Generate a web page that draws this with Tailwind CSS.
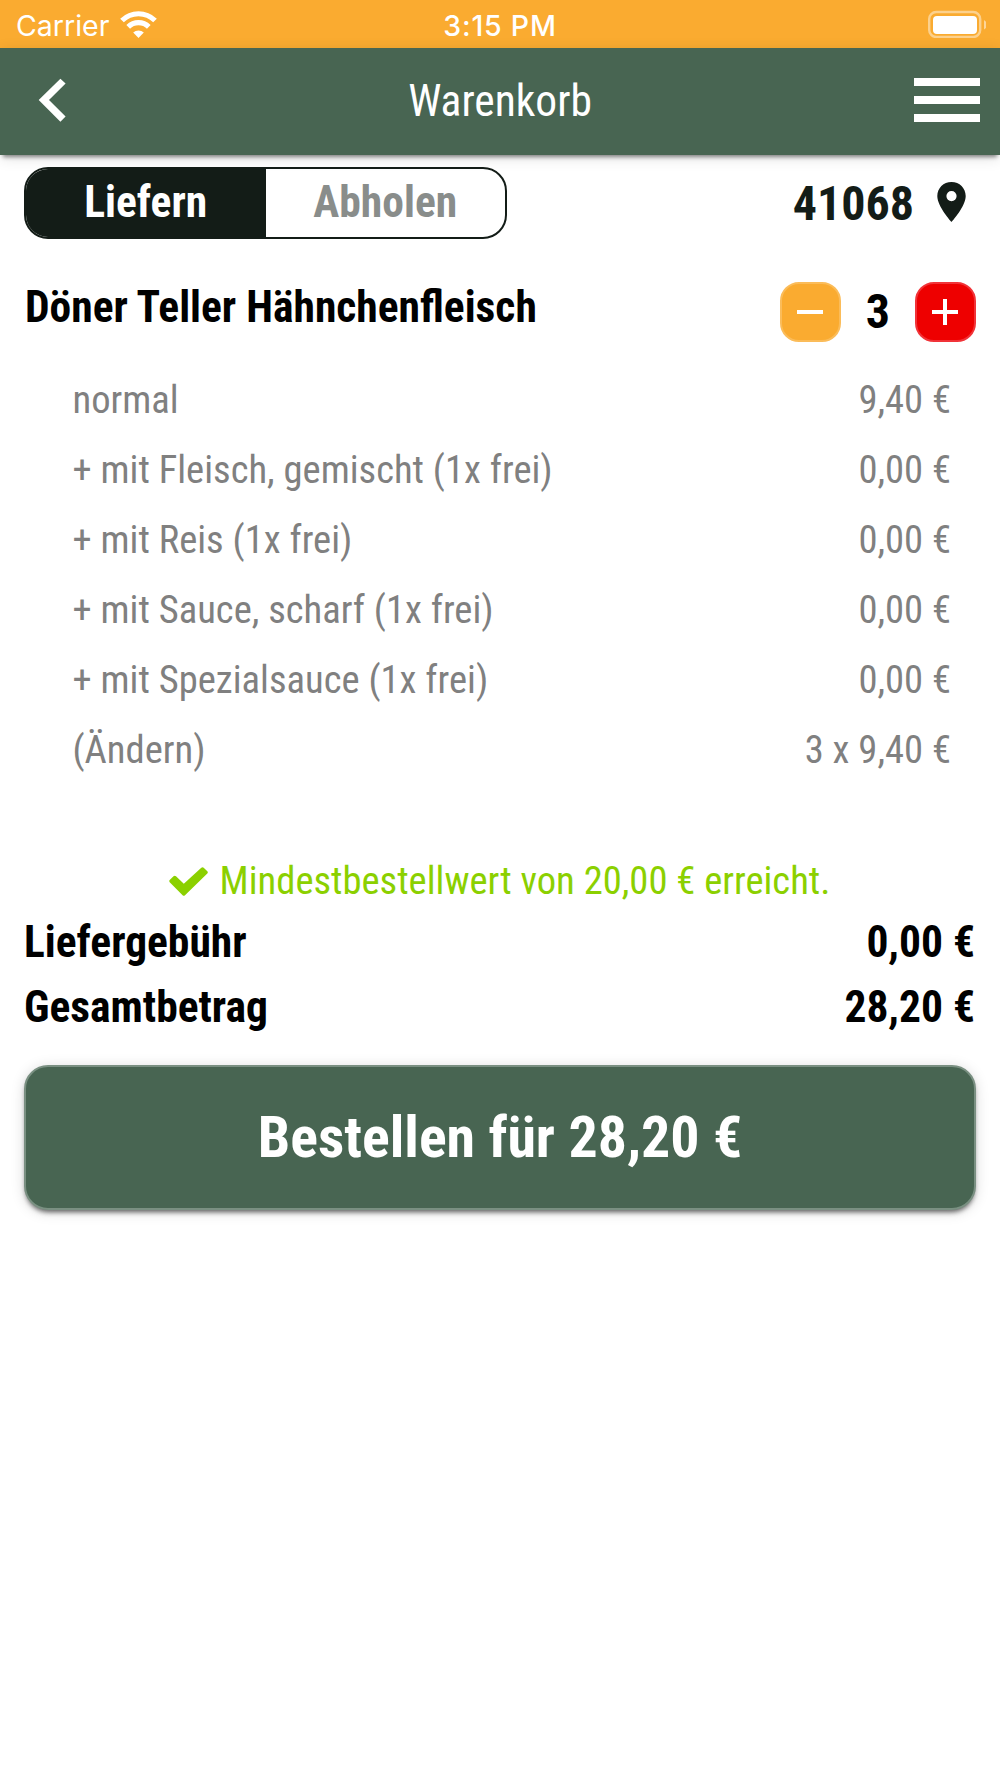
<!DOCTYPE html>
<html lang="de">
<head>
<meta charset="utf-8">
<title>Warenkorb</title>
<script src="https://cdn.jsdelivr.net/npm/@tailwindcss/browser@4"></script>
</head>
<body class="min-h-[1778px] bg-white font-['Roboto_Condensed',Roboto,sans-serif] text-black">
<div class="grid h-12 grid-cols-[1fr_auto_1fr] items-center bg-[#faab30] px-[14px] font-[Inter,sans-serif] text-white">
  <div class="flex items-center gap-[11px] pl-[2px]">
    <span class="pt-1 text-[28.5px] leading-none">Carrier</span>
    <svg class="h-[27px] w-[37px]" viewBox="0 0 37 27" fill="none" stroke="#fff" stroke-width="5.2">
      <path d="M2 9.500A23.500 23.500 0 0 1 35 9.500"/>
      <path d="M8.200 15.900A14.600 14.600 0 0 1 28.800 15.900"/>
      <path d="M18.500 27L13.200 21.600A7.500 7.500 0 0 1 23.800 21.600Z" fill="#fff" stroke="none"/>
    </svg>
  </div>
  <span class="pt-1 text-[28.5px] font-medium leading-none tracking-[0.8px]">3:15 PM</span>
  <svg class="h-7 w-[59px] justify-self-end" viewBox="0 0 59 28" fill="none">
    <rect x="2.200" y="2" width="51" height="25" rx="7" stroke="#fff" stroke-opacity=".45" stroke-width="2.400"/>
    <rect x="6" y="6" width="44" height="18" rx="4" fill="#fff"/>
    <path d="M57 10Q60 12 60 14.800T57 19.500Z" fill="#fff" fill-opacity=".5"/>
  </svg>
</div>
<header class="grid h-[107px] grid-cols-[1fr_auto_1fr] items-center bg-[#486552] px-5 text-white shadow-[0_5px_4px_-3px_rgba(0,0,0,0.45),0_3px_14px_rgba(0,0,0,0.12)]">
  <svg class="mt-[-3px] ml-[18px] h-11 w-7" viewBox="0 0 28 44" fill="#fff"><path d="M22.400 0.700L27.600 5.600L11 22L27.600 38.600L22.400 43.800L0.700 22Z"/></svg>
  <h1 class="text-[43.5px] leading-none">Warenkorb</h1>
  <div class="mt-[-3px] flex w-[66px] flex-col gap-[10px] justify-self-end">
    <span class="h-2 bg-white"></span><span class="h-2 bg-white"></span><span class="h-2 bg-white"></span>
  </div>
</header>
<main class="px-6 pt-3">
  <div class="flex h-[72px] items-center justify-between">
    <div class="grid h-[72px] w-[483px] grid-cols-2 overflow-hidden rounded-[24px] border-2 border-[#131c17] text-center text-[43.5px] font-bold leading-[67px]">
      <span class="bg-[#131c17] text-white">Liefern</span>
      <span class="text-[#898d8b]">Abholen</span>
    </div>
    <div class="flex items-center gap-[23px] pr-[10px] text-[#131c17]">
      <span class="pt-[2px] text-[48px] font-bold leading-[74px]">41068</span>
      <svg class="mt-[-2px] h-10 w-[29px]" viewBox="0 0 29 40" fill="#131c17" fill-rule="evenodd"><path d="M14.500 0C6.400 0 .3 6.200.3 14C.3 24.500 14.500 40 14.500 40S28.700 24.500 28.700 14C28.700 6.200 22.600 0 14.500 0ZM14.500 9A5.100 5.100 0 1 1 14.500 19.200A5.100 5.100 0 1 1 14.500 9Z"/></svg>
    </div>
  </div>
  <div class="mt-[43px] flex h-[60px] items-start justify-between">
    <h2 class="pl-px text-[43.5px] font-bold leading-[52px]">Döner Teller Hähnchenfleisch</h2>
    <div class="flex items-center">
      <button class="flex h-[60px] w-[61px] items-center justify-center rounded-[19px] border-2 border-[#fbbc59] bg-[#faab30]"><span class="mr-px mb-px h-1 w-[26px] bg-white"></span></button>
      <span class="w-[74px] text-center text-[48px] font-bold leading-[60px]">3</span>
      <button class="flex h-[60px] w-[61px] items-center justify-center rounded-[19px] border-2 border-[#f13338] bg-[#ee0000]"><svg class="mr-px mb-px h-[26px] w-[26px]" viewBox="0 0 26 26" stroke="#fff" stroke-width="4"><path d="M0 13H26M13 0V26"/></svg></button>
    </div>
  </div>
  <div class="mt-[23px] pl-[48.500px] pr-[25px] text-[38.6px] leading-[70px] text-[#808080]">
    <div class="flex justify-between"><span>normal</span><span>9,40 €</span></div>
    <div class="flex justify-between"><span>+ mit Fleisch, gemischt (1x frei)</span><span>0,00 €</span></div>
    <div class="flex justify-between"><span>+ mit Reis (1x frei)</span><span>0,00 €</span></div>
    <div class="flex justify-between"><span>+ mit Sauce, scharf (1x frei)</span><span>0,00 €</span></div>
    <div class="flex justify-between"><span>+ mit Spezialsauce (1x frei)</span><span>0,00 €</span></div>
    <div class="flex justify-between"><span>(Ändern)</span><span>3 x 9,40 €</span></div>
  </div>
  <div class="mt-[65px] flex h-[60px] items-start justify-center gap-3 pt-px pr-px text-[38.6px] leading-[60px] text-[#8bd000]">
    <svg class="mt-4 h-[29px] w-[39px]" viewBox="0 0 39 29" fill="#8bd000"><path d="M.7 15.200Q-.2 14 .7 13L4.500 9.300Q5.800 8.300 7 9.300L14.800 16.800L32.300 .7Q33.500 -.2 34.700 .7L38.300 4.300Q39.300 5.400 38.300 6.600L16 28.200Q14.800 29.200 13.600 28.200Z"/></svg>
    <span>Mindestbestellwert von 20,00 € erreicht.</span>
  </div>
  <div class="pr-px text-[43.5px] font-bold leading-[65px]">
    <div class="flex justify-between"><span>Liefergebühr</span><span>0,00 €</span></div>
    <div class="flex justify-between"><span>Gesamtbetrag</span><span>28,20 €</span></div>
  </div>
  <button class="mt-[25px] block h-[145px] w-full rounded-[24px] border-[2.67px] border-[#7a9082] bg-[#486552] text-[57.9px] font-bold leading-[139px] text-white shadow-[0_4px_5px_-2px_rgba(0,0,0,0.6),0_2px_14px_rgba(0,0,0,0.15)]">Bestellen für 28,20 €</button>
</main>
</body>
</html>
